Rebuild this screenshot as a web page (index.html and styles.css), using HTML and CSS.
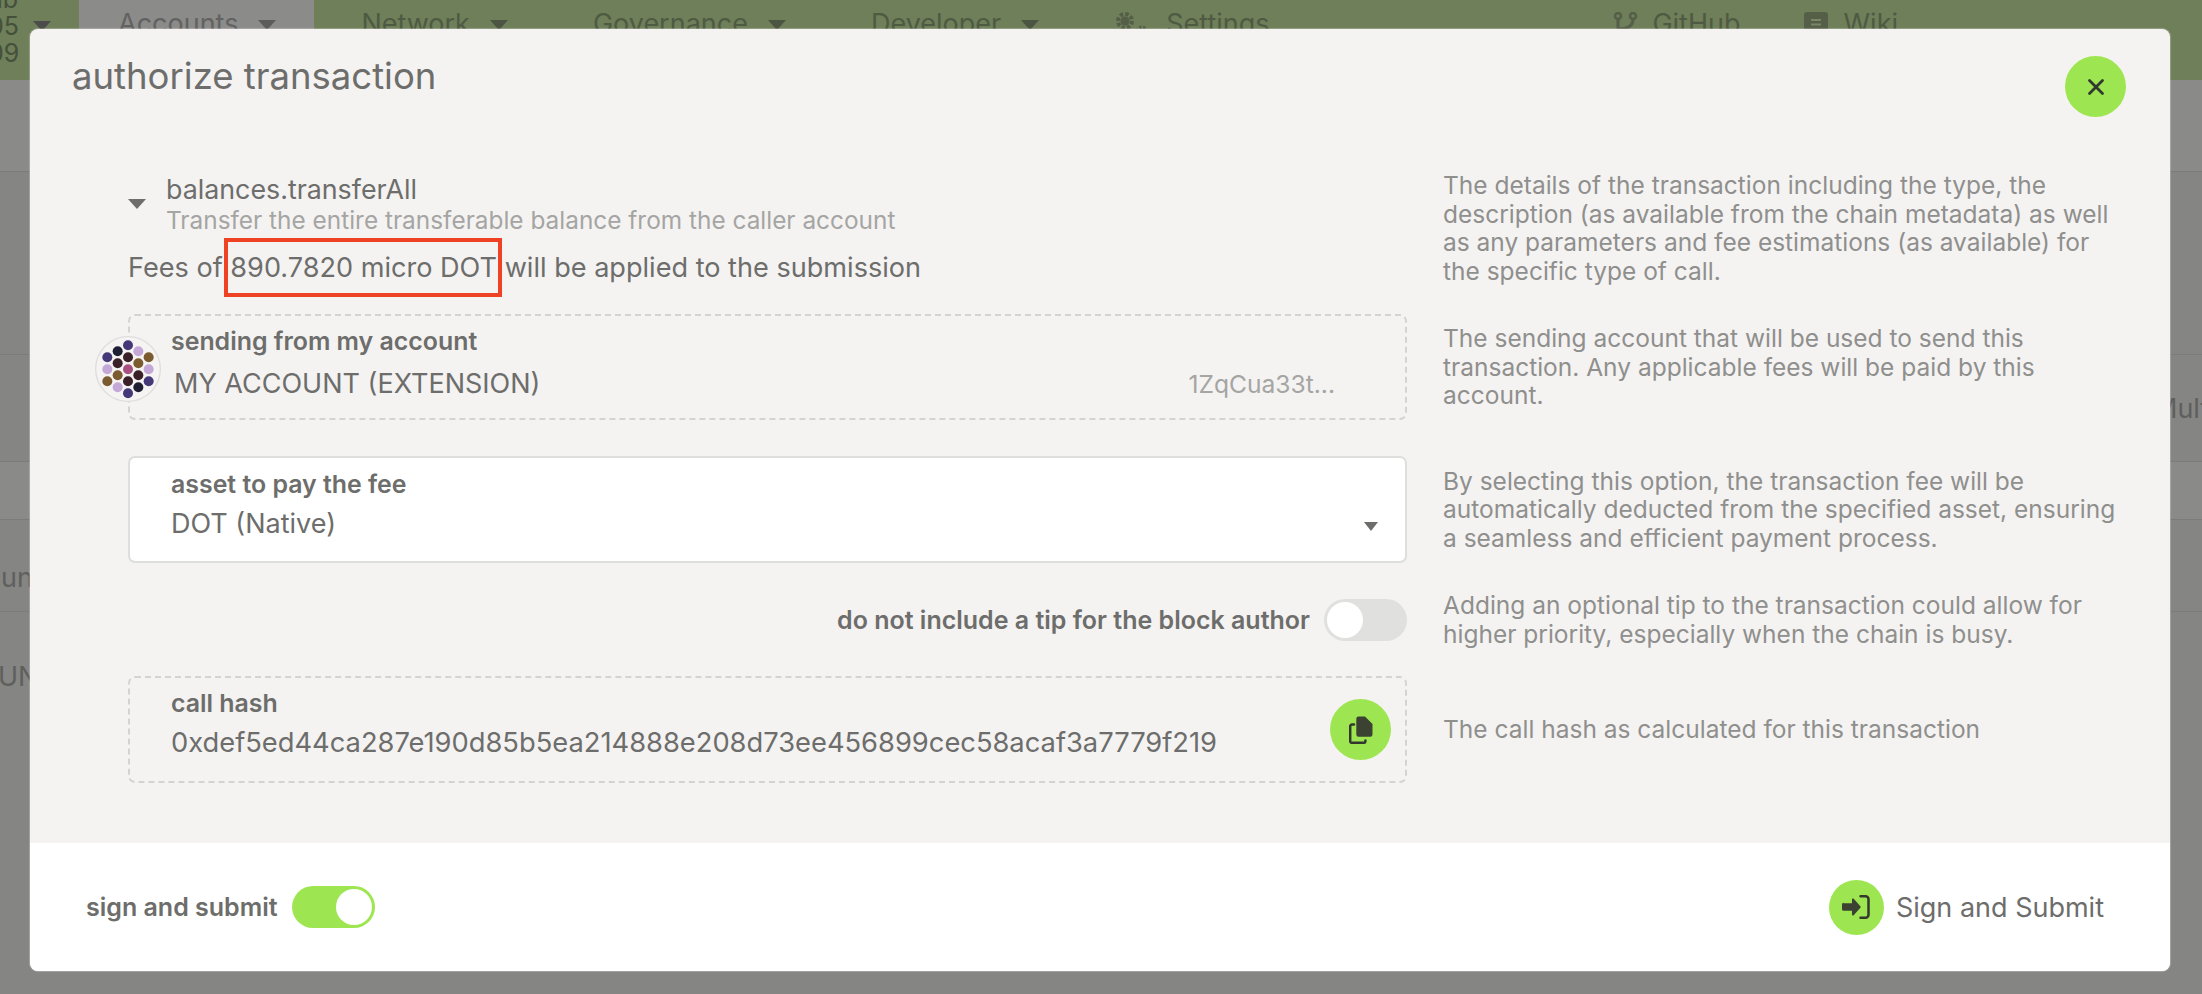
FILE: index.html
```html
<!DOCTYPE html>
<html lang="en">
<head>
<meta charset="utf-8">
<title>authorize transaction</title>
<link rel="stylesheet" href="styles.css">
</head>
<body>
<div class="page">
  <header class="topbar">
    <div class="chain"><span>ub</span><span>05</span><span>09</span></div>
    <span class="caret caret-chain"></span>
    <nav class="nav">
      <a class="tab active">Accounts<span class="caret"></span></a>
      <a class="tab">Network<span class="caret"></span></a>
      <a class="tab">Governance<span class="caret"></span></a>
      <a class="tab">Developer<span class="caret"></span></a>
      <a class="tab tab-settings">
        <svg class="nav-icon icon-cogs" viewBox="0 0 33 28"><circle class="cog-teeth" cx="9" cy="9" r="7"/><circle class="cog-body" cx="9" cy="9" r="4.500"/><circle class="cog-teeth small" cx="26" cy="20" r="5"/><circle class="cog-body" cx="26" cy="20" r="3"/></svg>
        Settings
      </a>
    </nav>
    <div class="links">
      <a class="tab">
        <svg class="nav-icon icon-branch" viewBox="0 0 25 28"><path class="branch-line" d="M5 7v14M5 17c10 0 15-3 15-10"/><circle class="branch-dot" cx="5" cy="4" r="3"/><circle class="branch-dot" cx="20" cy="4" r="3"/><circle class="branch-dot" cx="5" cy="24" r="3"/></svg>
        GitHub
      </a>
      <a class="tab">
        <svg class="nav-icon icon-book" viewBox="0 0 24 28"><rect x="0" y="0" width="24" height="30" rx="3"/><path class="book-line" d="M7 8h10M7 12.500h10"/></svg>
        Wiki
      </a>
    </div>
  </header>
  <div class="bg-rows">
    <div class="bg-row r1"></div>
    <div class="bg-row r2"></div>
    <div class="bg-row r3"><span class="bg-right">Multisig</span></div>
    <div class="bg-row r4"></div>
    <div class="bg-row r5"><span>unts</span></div>
    <div class="bg-row r6"><span>UNT</span></div>
  </div>
</div>

<section class="modal">
  <div class="modal-top">
    <div class="modal-head">
      <h1 class="title">authorize transaction</h1>
      <button class="round-btn close-btn">
        <svg viewBox="0 0 20 20" class="close-icon"><path d="M3.500 3.500l13 13M16.500 3.500l-13 13"/></svg>
      </button>
    </div>

    <div class="row row-details">
      <div class="col-main">
        <div class="call">
          <span class="caret call-caret"></span>
          <div class="call-text">
            <div class="call-name">balances.transferAll</div>
            <div class="call-desc">Transfer the entire transferable balance from the caller account</div>
          </div>
        </div>
        <div class="fees">Fees of <span class="mark">890.7820 micro DOT</span> will be applied to the submission</div>
      </div>
      <p class="help">The details of the transaction including the type, the description (as available from the chain metadata) as well as any parameters and fee estimations (as available) for the specific type of call.</p>
    </div>

    <div class="row row-sender">
      <div class="col-main">
        <div class="field dashed sender">
          <svg class="identicon" viewBox="49 105 198 198">
            <circle cx="148" cy="204" r="97" fill="#f5f4f3" stroke="#dedddc" stroke-width="4"/>
            <circle cx="148" cy="133" r="15" fill="#453878"/>
            <circle cx="117" cy="151" r="15" fill="#1e1f33"/>
            <circle cx="179" cy="151" r="15" fill="#c4a8d8"/>
            <circle cx="86" cy="169" r="15" fill="#453878"/>
            <circle cx="148" cy="169" r="15" fill="#3a2028"/>
            <circle cx="210" cy="169" r="15" fill="#7a5c30"/>
            <circle cx="117" cy="187" r="15" fill="#3a2028"/>
            <circle cx="179" cy="187" r="15" fill="#7a5c30"/>
            <circle cx="86" cy="205" r="15" fill="#c4a8d8"/>
            <circle cx="148" cy="205" r="15" fill="#a8507f"/>
            <circle cx="210" cy="205" r="15" fill="#c4a8d8"/>
            <circle cx="117" cy="223" r="15" fill="#7a5c30"/>
            <circle cx="179" cy="223" r="15" fill="#3a2028"/>
            <circle cx="86" cy="241" r="15" fill="#7a5c30"/>
            <circle cx="148" cy="241" r="15" fill="#3a2028"/>
            <circle cx="210" cy="241" r="15" fill="#453878"/>
            <circle cx="117" cy="259" r="15" fill="#c4a8d8"/>
            <circle cx="179" cy="259" r="15" fill="#1e1f33"/>
            <circle cx="148" cy="277" r="15" fill="#453878"/>
          </svg>
          <label class="field-label">sending from my account</label>
          <div class="sender-value">
            <span class="field-value">MY ACCOUNT (EXTENSION)</span>
            <span class="address">1ZqCua33t...</span>
          </div>
        </div>
      </div>
      <p class="help">The sending account that will be used to send this transaction. Any applicable fees will be paid by this account.</p>
    </div>

    <div class="row row-asset">
      <div class="col-main">
        <div class="field select">
          <label class="field-label">asset to pay the fee</label>
          <div class="select-value">
            <span class="field-value">DOT (Native)</span>
            <span class="caret select-caret"></span>
          </div>
        </div>
      </div>
      <p class="help">By selecting this option, the transaction fee will be automatically deducted from the specified asset, ensuring a seamless and efficient payment process.</p>
    </div>

    <div class="row row-tip">
      <div class="col-main tip">
        <span class="toggle-label">do not include a tip for the block author</span>
        <span class="toggle off"><span class="knob"></span></span>
      </div>
      <p class="help">Adding an optional tip to the transaction could allow for higher priority, especially when the chain is busy.</p>
    </div>

    <div class="row row-hash">
      <div class="col-main">
        <div class="field dashed hash">
          <div>
            <label class="field-label">call hash</label>
            <div class="field-value hash-value">0xdef5ed44ca287e190d85b5ea214888e208d73ee456899cec58acaf3a7779f219</div>
          </div>
          <button class="round-btn copy-btn">
            <svg viewBox="0 0 24 28" class="copy-icon"><path class="icon-solid" d="M9.500 .5h6.500l7.500 7.500v10.500a2.200 2.200 0 0 1-2.200 2.200h-11.800a2.200 2.200 0 0 1-2.200-2.200v-15.800a2.200 2.200 0 0 1 2.200-2.200z"/><path class="icon-line" d="M5 8.500H3a1.800 1.800 0 0 0-1.800 1.800v14.900a1.600 1.600 0 0 0 1.600 1.600h12a1.600 1.600 0 0 0 1.600-1.600v-.7"/></svg>
          </button>
        </div>
      </div>
      <p class="help">The call hash as calculated for this transaction</p>
    </div>
  </div>

  <footer class="modal-foot">
    <div class="foot-toggle">
      <span class="toggle-label">sign and submit</span>
      <span class="toggle on"><span class="knob"></span></span>
    </div>
    <button class="submit">
      <span class="round-btn submit-icon">
        <svg viewBox="0 0 28 24"><path class="icon-solid" d="M1.500 8.300h8.500V4.500a1 1 0 0 1 1.700-.7l6.700 7.500a1 1 0 0 1 0 1.400l-6.700 7.500a1 1 0 0 1-1.700-.7v-3.800H1.500a1.500 1.500 0 0 1-1.500-1.500v-4.900a1.500 1.500 0 0 1 1.500-1.500z"/><path class="icon-line" d="M18.500 1.300h5a3 3 0 0 1 3 3v15.400a3 3 0 0 1-3 3h-5"/></svg>
      </span>
      Sign and Submit
    </button>
  </footer>
</section>
</body>
</html>
```
FILE: styles.css
```css
* { box-sizing: border-box; }
html, body { margin: 0; height: 100%; }
body {
  background: #858583;
  font-family: Inter, "Liberation Sans", sans-serif;
  color: #6d6d6b;
  overflow: hidden;
}

/* page behind the dimmed overlay */
.page { height: 100vh; }
.topbar {
  height: 80px;
  background: #6e7f5a;
  display: flex;
  align-items: flex-start;
  color: #4f5a42;
  font-size: 27px;
  position: relative;
}
.chain {
  width: 33px;
  flex: none;
  display: flex;
  flex-direction: column;
  line-height: 27px;
  font-size: 25px;
  margin-top: -14px;
  overflow: hidden;
  color: #45503a;
}
.chain span { display: block; margin-left: -12px; white-space: nowrap; }
.caret {
  display: inline-block;
  width: 0;
  height: 0;
  border-left: 9px solid transparent;
  border-right: 9px solid transparent;
  border-top: 10px solid currentColor;
}
.caret-chain { margin-top: 21px; color: #4c4c4a; flex: none; }
.nav { display: flex; gap: 8px; margin-left: 28px; }
.links { display: flex; margin-left: auto; margin-right: 304px; gap: 64px; }
.tab {
  display: flex;
  align-items: flex-start;
  height: 80px;
  padding: 0 38px 0 39px;
  line-height: 48px;
  white-space: nowrap;
}
.tab-settings { padding-left: 31px; }
.tab .caret { margin: 20px 0 0 20px; color: #4c5442; }
.tab.active { background: #8b8b8a; color: #626260; }
.tab.active .caret { color: #5c5c5a; }
.links .tab { padding: 0; }
.nav-icon { fill: #555f48; margin-top: 12px; flex: none; }
.icon-cogs { width: 33px; height: 28px; margin-right: 17px; }
.icon-branch { width: 25px; height: 28px; margin-right: 14px; }
.icon-book { width: 24px; height: 28px; margin-right: 15px; }
.cog-teeth { fill: none; stroke: #555f48; stroke-width: 4; stroke-dasharray: 3.500 2; }
.cog-teeth.small { stroke-width: 3; stroke-dasharray: 2.500 1.500; }
.cog-body { fill: #555f48; }
.branch-line { fill: none; stroke: #555f48; stroke-width: 3; }
.branch-dot { fill: none; stroke: #555f48; stroke-width: 2.500; }
.book-line { fill: none; stroke: #7a8766; stroke-width: 2; }

.bg-rows { display: flex; flex-direction: column; }
.bg-row { border-bottom: 1px solid #7b7b79; display: flex; font-size: 27px; color: #5f5f5d; white-space: nowrap; }
.r1 { height: 92px; background: #8a8a89; }
.r2 { height: 183px; }
.r3 { height: 107px; position: relative; }
.bg-right { position: absolute; left: 2153px; top: 37px; }
.r4 { height: 58px; background: #8a8a88; }
.r5 { height: 92px; align-items: center; }
.r5 span { margin-left: 1px; margin-top: 24px; }
.r6 { height: 160px; border-bottom: 0; }
.r6 span { margin-left: -2px; margin-top: 48px; }

/* modal */
.modal {
  position: absolute;
  left: 30px;
  top: 29px;
  width: 2140px;
  height: 942px;
  background: #f4f3f2;
  border-radius: 8px;
  display: flex;
  flex-direction: column;
  overflow: hidden;
  box-shadow: 0 0 1px 1px rgba(255,255,255,.25);
}
.modal-top { flex: 1; }
.modal-head {
  display: flex;
  justify-content: space-between;
  align-items: flex-start;
  height: 141px;
  padding: 27px 44px 0 42px;
}
.title {
  margin: 0;
  font-size: 36.500px;
  line-height: 40px;
  font-weight: 400;
  color: #6d6d6b;
}
.round-btn {
  display: flex;
  align-items: center;
  justify-content: center;
  border: 0;
  padding: 0;
  border-radius: 50%;
  background: #9de651;
  flex: none;
}
.close-btn { width: 61px; height: 61px; }
.close-icon { width: 20px; height: 20px; fill: none; stroke: #33382e; stroke-width: 2.800; stroke-linecap: round; }

.row {
  display: grid;
  grid-template-columns: 1279px 680px;
  column-gap: 36px;
  padding-left: 98px;
  align-items: center;
}
.help {
  margin: 0;
  font-size: 24.500px;
  line-height: 28.600px;
  color: #8f8f8d;
}
.row-details { height: 144px; align-items: start; }
.row-details .help { margin-top: 1px; }
.call { display: flex; align-items: center; gap: 20px; }
.call-caret { color: #6d6d6b; margin-top: 4px; }
.call-name { font-size: 26.800px; line-height: 35px; margin-top: 2px; }
.call-desc { font-size: 24.400px; line-height: 27px; color: #a5a5a3; }
.fees { font-size: 27.100px; line-height: 38px; margin-top: 15px; }
.mark { position: relative; }
.mark::after {
  content: "";
  position: absolute;
  left: -6px;
  right: -5px;
  top: -13px;
  bottom: -13px;
  border: 4px solid #ef4123;
}

.row-sender { margin-bottom: 36px; }
.field { border-radius: 7px; }
.dashed { border: 2px dashed #d3d3d1; }
.sender { position: relative; height: 106px; padding: 10px 0 0 41px; }
.identicon {
  position: absolute;
  left: -35px;
  top: 20px;
  width: 66px;
  height: 66px;
}
.field-label {
  display: block;
  font-size: 24.900px;
  line-height: 30px;
  font-weight: 600;
  color: #6d6d6b;
}
.field-value { font-size: 27px; line-height: 36px; color: #6d6d6b; }
.sender-value { display: flex; justify-content: space-between; margin-top: 10px; padding: 0 70px 0 3px; }
.address { font-size: 24.600px; line-height: 36px; color: #a5a5a3; }

.row-asset { margin-bottom: 36px; }
.select {
  height: 107px;
  background: #fff;
  border: 2px solid #dededc;
  padding: 11px 0 0 41px;
}
.select-value { display: flex; justify-content: space-between; align-items: center; margin-top: 7px; padding-right: 27px; }
.select-caret { color: #6d6d6b; border-left-width: 7px; border-right-width: 7px; border-top-width: 9px; margin-top: 4px; }

.row-tip { grid-template-rows: 42px; margin-bottom: 35px; }
.tip { display: flex; justify-content: flex-end; align-items: center; gap: 14px; height: 42px; }
.toggle-label { font-size: 25px; line-height: 30px; font-weight: 600; color: #6d6d6b; white-space: nowrap; }
.toggle {
  width: 83px;
  height: 42px;
  border-radius: 21px;
  display: flex;
  align-items: center;
  padding: 3px;
}
.toggle.off { background: #e0e0de; justify-content: flex-start; }
.toggle.on { background: #9de651; justify-content: flex-end; }
.knob { width: 36px; height: 36px; border-radius: 50%; background: #fff; }

.hash {
  height: 107px;
  display: flex;
  justify-content: space-between;
  align-items: flex-start;
  padding: 10px 14px 0 41px;
}
.hash-value { margin-top: 7px; font-size: 27.300px; }
.copy-btn { width: 61px; height: 61px; margin-top: 11px; }
.copy-icon { width: 24px; height: 28px; }
.icon-solid { fill: #3c4232; }
.icon-line { fill: none; stroke: #33382e; stroke-width: 2.500; stroke-linecap: round; }

.modal-foot {
  height: 128px;
  background: #fff;
  display: flex;
  justify-content: space-between;
  align-items: center;
  padding: 0 66px 0 56px;
  flex: none;
}
.foot-toggle { display: flex; align-items: center; gap: 14px; }
.submit {
  display: flex;
  align-items: center;
  gap: 12px;
  border: 0;
  background: none;
  padding: 0;
  font: inherit;
  font-size: 27px;
  color: #6d6d6b;
}
.submit-icon { width: 55px; height: 55px; }
.submit-icon svg { width: 28px; height: 24px; }
```
